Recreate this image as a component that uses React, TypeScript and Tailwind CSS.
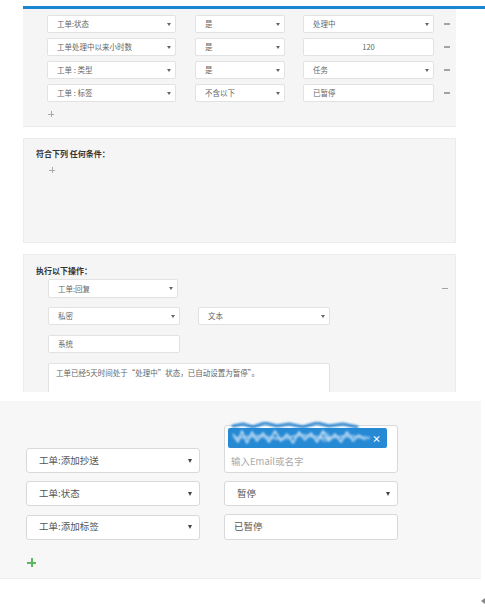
import React from 'react';

const font = { fontFamily: '"Noto Sans CJK SC", "Liberation Sans", sans-serif' };

function Caret({ big = false }: { big?: boolean }) {
  return big ? (
    <span className="block w-0 h-0 border-l-[2.5px] border-r-[2.5px] border-t-[4px] border-l-transparent border-r-transparent border-t-[#444]" />
  ) : (
    <span className="block w-0 h-0 border-l-[2px] border-r-[2px] border-t-[3px] border-l-transparent border-r-transparent border-t-[#666]" />
  );
}

// compact select used in the condition rows
function MiniSelect({ label, width }: { label: string; width: string }) {
  return (
    <div
      className={`${width} h-[18px] flex items-center justify-between pl-[9px] pr-[4px] bg-white border border-[#e2e2e2] rounded-[2px] text-[7.5px] text-[#666]`}
    >
      <span className="leading-none">{label}</span>
      <Caret />
    </div>
  );
}

function MiniInput({ value, width, center = false }: { value: string; width: string; center?: boolean }) {
  return (
    <div
      className={`${width} h-[18px] flex items-center ${center ? 'justify-center' : 'pl-[9px]'} bg-white border border-[#e2e2e2] rounded-[2px] text-[7.5px] text-[#666]`}
    >
      <span className="leading-none">{value}</span>
    </div>
  );
}

function Minus() {
  return <span className="block w-[6px] h-[1.5px] bg-[#a3a3a3]" />;
}

function MiniPlus() {
  return (
    <span className="relative block w-[6px] h-[6px]">
      <span className="absolute left-0 top-[2.5px] w-[6px] h-[1px] bg-[#aaa]" />
      <span className="absolute left-[2.5px] top-0 w-[1px] h-[6px] bg-[#aaa]" />
    </span>
  );
}

// scribbled-out recipient address on the tag
function Scribble() {
  return (
    <svg
      className="absolute left-[1px] top-[-6px] blur-[0.8px]"
      width="150"
      height="26"
      viewBox="0 0 150 26"
      fill="none"
    >
      <path
        d="M4 4 L14 2 L24 5 L36 1 L48 4 L60 2 L74 5 L88 1 L100 4 L114 2 L128 5"
        stroke="#2b86d2"
        strokeWidth="3"
        strokeLinecap="round"
      />
      <path
        d="M4 12 L9 20 L13 9 L18 21 L23 10 L28 19 L34 11 L40 20 L46 9 L52 19 L58 12 L64 21 L70 10 L76 18 L82 11 L88 20 L94 9 L100 19 L106 12 L112 20 L118 10 L124 19 L130 13 L136 18"
        stroke="#e4f1fc"
        strokeWidth="1.6"
        strokeLinejoin="round"
        opacity="0.85"
      />
      <path
        d="M6 16 L30 14 L52 17 L72 13 L96 16 L120 14 L140 16"
        stroke="#bcdaf3"
        strokeWidth="2.5"
        strokeLinecap="round"
        opacity="0.7"
      />
      <circle cx="96" cy="15" r="4" stroke="#d8ebfb" strokeWidth="1.2" opacity="0.8" />
    </svg>
  );
}

const conditions = [
  { field: '工单:状态', op: '是', value: '处理中', kind: 'select' },
  { field: '工单处理中以来小时数', op: '是', value: '120', kind: 'number' },
  { field: '工单 : 类型', op: '是', value: '任务', kind: 'select' },
  { field: '工单 : 标签', op: '不含以下', value: '已暂停', kind: 'text' },
];

function Select({ label }: { label: string }) {
  return (
    <div className="w-[174px] h-[25px] flex items-center justify-between pl-[12px] pr-[7px] bg-white border border-[#d9d9d9] rounded-[3px] text-[9.5px] text-[#555]">
      <span className="leading-none">{label}</span>
      <Caret big />
    </div>
  );
}

export default function App() {
  return (
    <div className="w-[485px] h-[608px] bg-white overflow-hidden" style={font}>
      {/* rule editor: conditions + actions */}
      <div className="pt-[6px] pl-[23px]">
        <div className="h-[3px] bg-[#1b86d0]" />

        <div className="w-[433px] h-[118px] bg-[#f5f5f5] border-b border-[#ebebeb] pt-[6px] pl-[24px]">
          <div className="flex flex-col gap-[5px]">
            {conditions.map((c) => (
              <div key={c.field} className="flex items-center">
                <MiniSelect label={c.field} width="w-[129px]" />
                <div className="ml-[19px]">
                  <MiniSelect label={c.op} width="w-[90px]" />
                </div>
                <div className="ml-[18px]">
                  {c.kind === 'select' ? (
                    <MiniSelect label={c.value} width="w-[131px]" />
                  ) : (
                    <MiniInput value={c.value} width="w-[131px]" center={c.kind === 'number'} />
                  )}
                </div>
                <div className="ml-[10px]">
                  <Minus />
                </div>
              </div>
            ))}
          </div>
          <div className="mt-[9px] ml-[1px]">
            <MiniPlus />
          </div>
        </div>

        <div className="mt-[11px] w-[433px] h-[105px] bg-[#f5f5f5] border border-[#ececec] pt-[9px] pl-[12px]">
          <div className="text-[8px] font-bold text-[#333] leading-[12px]">符合下列 任何条件：</div>
          <div className="mt-[7px] ml-[13px]">
            <MiniPlus />
          </div>
        </div>

        <div className="mt-[11px] w-[433px] h-[138px] bg-[#f5f5f5] border-t border-x border-[#ececec] overflow-hidden pt-[10px] pl-[12px]">
          <div className="text-[8px] font-bold text-[#333] leading-[12px]">执行以下操作：</div>
          <div className="flex items-center justify-between pr-[7px] mt-[2px] ml-[12px]">
            <div className="h-[19px] w-[130px] flex items-center justify-between pl-[9px] pr-[4px] bg-white border border-[#e2e2e2] rounded-[2px] text-[7.5px] text-[#666]">
              <span className="leading-none">工单:回复</span>
              <Caret />
            </div>
            <Minus />
          </div>
          <div className="flex items-center gap-[18px] mt-[9px] ml-[12px]">
            <MiniSelect label="私密" width="w-[132px]" />
            <MiniSelect label="文本" width="w-[132px]" />
          </div>
          <div className="mt-[10px] ml-[12px]">
            <MiniInput value="系统" width="w-[132px]" />
          </div>
          <div className="mt-[10px] ml-[12px] w-[282px] h-[40px] bg-white border border-[#e2e2e2] rounded-[2px] px-[7px] pt-[4px] text-[7.5px] text-[#666] leading-[10px]">
            工单已经5天时间处于“处理中”状态，已自动设置为暂停”。
          </div>
        </div>
      </div>

      {/* action rows */}
      <div className="mt-[9px] w-[481px] h-[178px] bg-[#f7f7f7] border-b border-[#eeeeee] pt-[24px] pl-[26px]">
        <div className="flex items-end gap-[24px]">
          <Select label="工单:添加抄送" />
          <div className="w-[174px] h-[48px] bg-white border border-[#d9d9d9] rounded-[3px] pl-[3px] pr-[10px] pt-[2px]">
            <div className="relative h-[20px] bg-[#2589d4] rounded-[2px] flex items-center justify-end pr-[6px]">
              <Scribble />
              <span className="relative text-[9px] font-bold text-white leading-none">×</span>
            </div>
            <div className="mt-[6px] pl-[3px] text-[9.5px] text-[#aaa] leading-[14px]">输入Email或名字</div>
          </div>
        </div>
        <div className="flex items-center gap-[24px] mt-[8px]">
          <Select label="工单:状态" />
          <div className="w-[174px] h-[25px] flex items-center justify-between pl-[12px] pr-[7px] bg-white border border-[#d9d9d9] rounded-[3px] text-[9.5px] text-[#555]">
            <span className="leading-none">暂停</span>
            <Caret big />
          </div>
        </div>
        <div className="flex items-center gap-[24px] mt-[8px]">
          <Select label="工单:添加标签" />
          <div className="w-[174px] h-[26px] flex items-center pl-[9px] bg-white border border-[#d9d9d9] rounded-[3px] text-[9.5px] text-[#555]">
            <span className="leading-none">已暂停</span>
          </div>
        </div>
        <div className="mt-[18px] ml-[1px] relative w-[9px] h-[9px]">
          <span className="absolute left-0 top-[3.5px] w-[9px] h-[2px] bg-[#5cb85c]" />
          <span className="absolute left-[3.5px] top-0 w-[2px] h-[9px] bg-[#5cb85c]" />
        </div>
      </div>

      <div className="flex justify-end mt-[19px]">
        <span className="block w-0 h-0 border-t-[3px] border-b-[3px] border-r-[4px] border-t-transparent border-b-transparent border-r-[#888]" />
      </div>
    </div>
  );
}
